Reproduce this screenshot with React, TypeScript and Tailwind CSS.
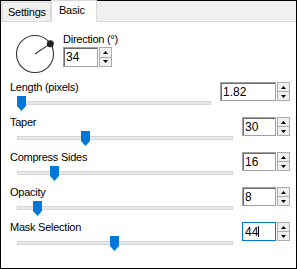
import React from 'react';

interface RowData {
    label: string;
    value: string;
    thumb: number;
    wide?: boolean;
    focused?: boolean;
}

const rows: RowData[] = [
    { label: 'Length (pixels)', value: '1.82', thumb: 0, wide: true },
    { label: 'Taper', value: '30', thumb: 64 },
    { label: 'Compress Sides', value: '16', thumb: 33 },
    { label: 'Opacity', value: '8', thumb: 16 },
    { label: 'Mask Selection', value: '44', thumb: 93, focused: true },
];

const Arrow: React.FC<{ up?: boolean }> = ({ up }) => (
    <svg width="5" height="3" viewBox="0 0 5 3">
        {up ? <polygon points="2.5,0 5,3 0,3" fill="#000" /> : <polygon points="0,0 5,0 2.5,3" fill="#000" />}
    </svg>
);

const Spinner: React.FC = () => (
    <div className="flex flex-col w-[13px] h-full ml-px">
        <div className="flex-1 flex items-center justify-center border border-[#acacac] bg-[#f0f0f0]">
            <Arrow up />
        </div>
        <div className="flex-1 flex items-center justify-center border border-t-0 border-[#acacac] bg-[#f0f0f0]">
            <Arrow />
        </div>
    </div>
);

const NumberBox: React.FC<{ value: string, width: string, height: string, focused?: boolean }> = ({ value, width, height, focused = false }) => (
    <div className={`flex ${height}`}>
        <div className={`${width} h-full border ${focused ? 'border-[#0078d7]' : 'border-[#a0a0a0] shadow-[inset_1px_1px_0_#6d6d6d]'} bg-white pl-[2px] flex items-center text-[12px] tracking-normal`}>
            <span>{value}</span>
            {focused && <span className="w-px h-[11px] bg-black"></span>}
        </div>
        <Spinner />
    </div>
);

const Thumb: React.FC<{ left: number }> = ({ left }) => (
    <svg width="9" height="15" viewBox="0 0 9 15" className="absolute top-px" style={{ left: `${left}px` }}>
        <polygon points="0,0 9,0 9,10 4.5,15 0,10" fill="#0078d7" />
    </svg>
);

const SliderRow: React.FC<{ row: RowData }> = ({ row }) => (
    <div className="flex h-[35px] pl-[9px] pr-[6px]">
        <div className="flex-1 flex flex-col">
            <div className="h-[13px] leading-[13px]">{row.label}</div>
            <div className="relative h-[16px] mt-px ml-[7px] flex items-center">
                <div className="w-full h-[4px] bg-[#e7eaea] border border-[#d6d6d6]"></div>
                <Thumb left={row.thumb} />
            </div>
        </div>
        <div className="ml-[9px] mt-px">
            <NumberBox value={row.value} width={row.wide ? 'w-[56px]' : 'w-[34px]'} height="h-[19px]" focused={row.focused} />
        </div>
    </div>
);

const Dial: React.FC<{ angle: number }> = ({ angle }) => {
    const rad = (angle * Math.PI) / 180;
    const x = 20 + 18.5 * Math.cos(rad);
    const y = 20 - 18.5 * Math.sin(rad);
    return (
        <svg width="40" height="40" viewBox="0 0 40 40" className="mt-px">
            <circle cx="20" cy="20" r="18.5" fill="none" stroke="#333" strokeWidth="1.1" />
            <line x1="20" y1="20" x2={x} y2={y} stroke="#333" strokeWidth="1.1" />
            <circle cx={x} cy={y} r="3.5" fill="#222" />
        </svg>
    );
};

const App: React.FC = () => {
    return (
        <div className="w-[297px] h-[269px] border border-black bg-white text-black text-[11px] tracking-[-0.25px] font-['Liberation_Sans',Arial,sans-serif]">
            <div className="h-[21px] bg-[#f0f0f0] border-b border-[#d9d9d9] flex items-end pl-px">
                <div className="w-[49px] h-[19px] bg-[#f0f0f0] border border-b-0 border-[#d9d9d9] pl-[5px] pt-[3px] leading-[13px]">Settings</div>
                <div className="w-[46px] h-[22px] -mb-px bg-white border border-b-0 border-[#d9d9d9] pl-[7px] pt-[3px] leading-[13px]">Basic</div>
            </div>
            <div className="flex pl-[14px] pt-[11px]">
                <Dial angle={34} />
                <div className="ml-[8px] flex flex-col">
                    <div className="h-[13px] leading-[13px]">Direction (°)</div>
                    <div className="mt-px">
                        <NumberBox value="34" width="w-[35px]" height="h-[20px]" />
                    </div>
                </div>
            </div>
            <div className="mt-[7px]">
                {rows.map(row => <SliderRow key={row.label} row={row} />)}
            </div>
        </div>
    );
};

export default App;
